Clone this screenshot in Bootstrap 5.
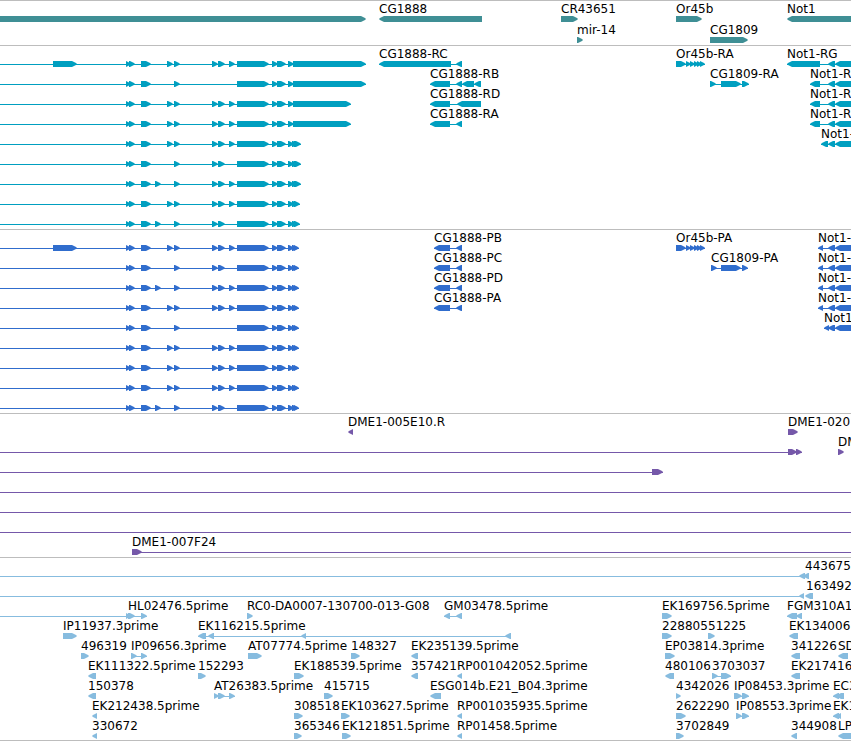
<!DOCTYPE html>
<html lang="en">
<head>
<meta charset="utf-8">
<meta name="viewport" content="width=device-width, initial-scale=1">
<title>Genome browser</title>
<link href="https://cdn.jsdelivr.net/npm/bootstrap@5.3.0/dist/css/bootstrap.min.css" rel="stylesheet">
<style>
  body { font-family: "DejaVu Sans", Verdana, sans-serif; font-size: 12px; line-height: 14px; color: #000; }
  .tracks { border-bottom: 1px solid #bdbdbd; }
  .track { border-top: 1px solid #bdbdbd; padding: 1px 0 2px; }
  .track-genes, .track-est { padding-bottom: 1px; }
  .lane { height: 20px; }
  .track-genes .lane { height: 21px; }
  .lane svg { height: 20px; fill: currentColor; }
  .feature-label { position: absolute; top: 0; color: #000; white-space: nowrap; }
  .track-genes { color: #3f8f95; }
  .track-transcripts { color: #009fc0; }
  .track-proteins { color: #306dcd; }
  .track-bacs { color: #7558a9; }
  .track-est { color: #87bcdf; }
</style>
<script src="https://cdn.jsdelivr.net/npm/bootstrap@5.3.0/dist/js/bootstrap.bundle.min.js"></script>
</head>
<body class="bg-white overflow-hidden">
<main class="tracks">
  <section class="track track-genes" data-track="genes" aria-label="Genes"></section>
  <section class="track track-transcripts" data-track="transcripts" aria-label="Transcripts"></section>
  <section class="track track-proteins" data-track="proteins" aria-label="Proteins"></section>
  <section class="track track-bacs" data-track="bacs" aria-label="BAC ends"></section>
  <section class="track track-est" data-track="est" aria-label="ESTs"></section>
</main>
<script>
// Feature: [label, strand (1 or -1), blocks as start/end pairs, label position]
const FAR = [4000, 4010], BEFORE = [-60, -40];

// Spliced transcript with optional exons: a, b, c, e, f
function spliced(opts, tail) {
  const has = k => opts.includes(k);
  return ['', 1, [BEFORE,
    ...(has('a') ? [[53, 77]] : []),
    [126, 131], [129, 135], [141, 151],
    ...(has('b') ? [[155, 161]] : []),
    ...(has('c') ? [[167, 173]] : []),
    [174, 180],
    ...(has('e') ? [[212, 218], [218, 225]] : []),
    ...(has('f') ? [[229, 235]] : []),
    [237, 269], [272, 278], [277, 286], [288, 294], ...tail]];
}
const end = x => [[292, 298], [294, x]];
const or45b = [[676, 686], [686, 691], [690, 695], [694, 699], [697, 702], [700, 705]];
const notExons = [[828, 835], [835, 4000]];
const notR = ['Not1-R', -1, [[810, 820], ...notExons]];
const notP = ['Not1-', -1, [[818, 823], ...notExons]];
const cgP = n => ['CG1888-' + n, -1, [[434, 450], [456, 462]]];

const data = {
  genes: [
    [['', 1, [[-60, 366]]], ['CG1888', -1, [[379, 482]]], ['CR43651', 1, [[561, 578]]],
     ['Or45b', 1, [[676, 702]]], ['Not1', -1, [[787, 4000]]]],
    [['mir-14', 1, [[577, 583]]], ['CG1809', 1, [[710, 748]]]]
  ],
  transcripts: [
    [spliced('acef', [[293, 366]]), ['CG1888-RC', -1, [[379, 451], [456, 462]]],
     ['Or45b-RA', 1, or45b], ['Not1-RG', -1, [[787, 820], ...notExons]]],
    [spliced('', [[293, 366]]), ['CG1888-RB', -1, [[430, 450], [456, 462], [462, 474], [474, 481]]],
     ['CG1809-RA', 1, [[710, 716], [721, 741], [742, 749]]], notR],
    [spliced('cef', [[293, 351]]), ['CG1888-RD', -1, [[430, 450], [457, 481]]], notR],
    [spliced('cef', [[293, 351]]), ['CG1888-RA', -1, [[430, 450], [456, 462]]], notR],
    [spliced('cef', end(301)), ['Not1-', -1, [[821, 828], ...notExons]]],
    [spliced('e', end(301))],
    [spliced('bef', end(301))],
    [spliced('cef', end(300))],
    [spliced('be', end(300))]
  ],
  proteins: [
    [spliced('acef', end(299)), cgP('PB'), ['Or45b-PA', 1, or45b], notP],
    [spliced('e', end(299)), cgP('PC'), ['CG1809-PA', 1, [[711, 717], [721, 741], [742, 748]]], notP],
    [spliced('bef', end(299)), cgP('PD'), notP],
    [spliced('cef', end(299)), cgP('PA'), notP],
    [spliced('', end(299)), ['Not1', -1, [[824, 829], ...notExons]]],
    [spliced('cef', end(299))],
    [spliced('cef', end(299))],
    [spliced('cef', end(299))],
    [spliced('be', end(299))]
  ],
  bacs: [
    [['DME1-005E10.R', -1, [[348, 353]]], ['DME1-020', 1, [[788, 798]]]],
    [['', 1, [BEFORE, [788, 797], [796, 802]]], ['DM', 1, [[838, 844]]]],
    [['', 1, [BEFORE, [652, 663]]]],
    [['', 1, [BEFORE, FAR]]],
    [['', 1, [BEFORE, FAR]]],
    [['', 1, [BEFORE, FAR]]],
    [['DME1-007F24', 1, [[132, 142], FAR]]]
  ],
  est: [
    [['443675', -1, [BEFORE, [799, 805], [803, 809]], 805]],
    [['', -1, [BEFORE, [799, 804]]], ['163492', -1, [[805, 813]], 806]],
    [['HL02476.5prime', 1, [BEFORE, [126, 131], [128, 135], [141, 147]], 128],
     ['RC0-DA0007-130700-013-G08', 1, [[247, 253]]], ['GM03478.5prime', -1, [[444, 450], [456, 462]]],
     ['EK169756.5prime', 1, [[662, 672]]], ['FGM310A1', -1, [[787, 797], [796, 802]]]],
    [['IP11937.3prime', 1, [[63, 77]]], ['EK116215.5prime', -1, [[198, 206], [208, 214], [301, 306], [505, 511]]],
     ['228805', 1, [[662, 672]]], ['51225', 1, [[708, 715]]], ['EK134006', -1, [[789, 798]]]],
    [['496319', 1, [[81, 89]]], ['IP09656.3prime', 1, [[131, 137], [141, 147]]],
     ['AT07774.5prime', 1, [[248, 262]]], ['148327', 1, [[351, 360]]], ['EK235139.5prime', -1, [[411, 418]]],
     ['EP03814.3prime', 1, [[665, 675]]], ['341226', -1, [[791, 800]]], ['SD', -1, [[838, 848]]]],
    [['EK111322.5prime', -1, [[88, 96]]], ['152293', 1, [[198, 206]]], ['EK188539.5prime', 1, [[294, 304]]],
     ['357421', -1, [[411, 418]]], ['RP001042052.5prime', -1, [[457, 462]]], ['480106', -1, [[665, 674]]],
     ['3703037', 1, [[712, 718], [721, 731]]], ['EK217416', -1, [[791, 800]]]],
    [['150378', -1, [[88, 96]]], ['AT26383.5prime', 1, [[214, 219], [218, 225], [229, 235]]],
     ['415715', 1, [[324, 333]]], ['ESG014b.E21_B04.3prime', -1, [[430, 441]]], ['4342026', 1, [[676, 681]]],
     ['IP08453.3prime', 1, [[734, 742], [742, 749]]], ['EC3', -1, [[833, 839], [836, 844]]]],
    [['EK212438.5prime', -1, [[92, 97]]], ['308518', 1, [[294, 303]]], ['EK103627.5prime', 1, [[341, 350]]],
     ['RP001035935.5prime', -1, [[457, 462]]], ['2622290', 1, [[676, 686]]],
     ['IP08553.3prime', 1, [[736, 742], [742, 749]]], ['EK1', -1, [[833, 839], [836, 841]]]],
    [['330672', -1, [[92, 97]]], ['365346', 1, [[294, 302]]], ['EK121851.5prime', 1, [[342, 351]]],
     ['RP01458.5prime', -1, [[457, 462]]], ['3702849', 1, [[676, 684]]], ['344908', -1, [[791, 797]]],
     ['LP', -1, [[838, 860]]]]
  ]
};

// A block with a pointed head in the direction of its strand
function block(strand, [a, b]) {
  const head = Math.min(5, b - a);
  return strand > 0
    ? `<path d="M${a} 14H${b - head}L${b - 1} 16L${b} 17L${b - 1} 18L${b - head} 20H${a}Z"/>`
    : `<path d="M${b} 14H${a + head}L${a + 1} 16L${a} 17L${a + 1} 18L${a + head} 20H${b}Z"/>`;
}
for (const section of document.querySelectorAll('[data-track]')) {
  section.innerHTML = data[section.dataset.track].map(lane => {
    const shapes = lane.map(([, strand, blocks]) => {
      const a = blocks[0][0], b = blocks[blocks.length - 1][1];
      const line = blocks.length > 1 ? `<rect x="${a}" y="17" width="${b - a}" height="1"/>` : '';
      return line + blocks.map(p => block(strand, p)).join('');
    }).join('');
    const labels = lane.filter(f => f[0]).map(([name, , blocks, at]) =>
      `<span class="feature-label" style="left:${at ?? blocks[0][0]}px">${name}</span>`).join('');
    return `<div class="lane position-relative overflow-hidden"><svg class="d-block w-100" aria-hidden="true">${shapes}</svg>${labels}</div>`;
  }).join('');
}
</script>
</body>
</html>
